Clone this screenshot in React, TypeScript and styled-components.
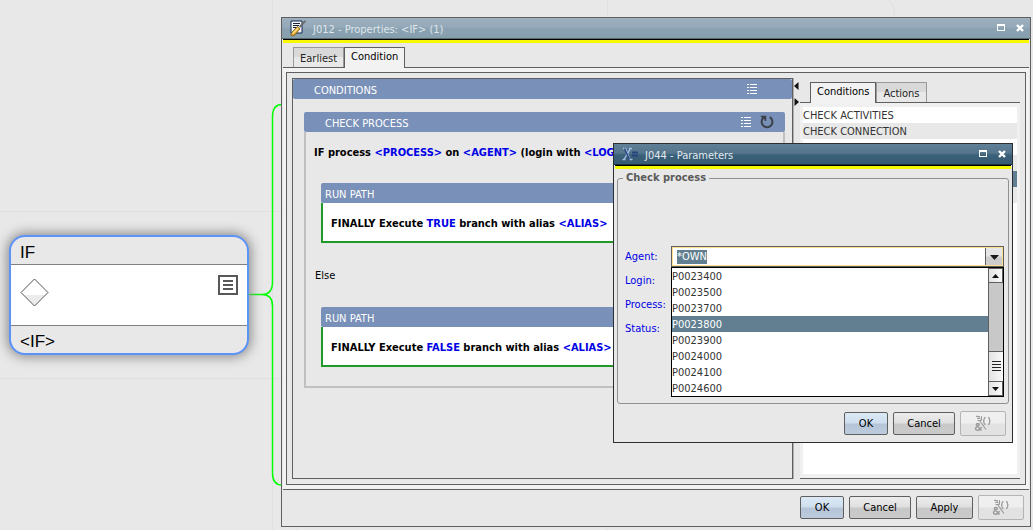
import React, { useEffect, useRef } from "react";
import styled, { createGlobalStyle } from "styled-components";

const GlobalStyle = createGlobalStyle`
  *, *::before, *::after { box-sizing: border-box; }
  body {
    margin: 0;
    background: #e8e8e8;
    color: #333;
    font: 11px/16px "DejaVu Sans Condensed", "Noto Sans", sans-serif;
  }
  button, input { font: inherit; color: inherit; margin: 0; padding: 0; }
  ul { margin: 0; padding: 0; list-style: none; }
`;

const Desktop = styled.main`
  position: relative;
  min-height: 100vh;
  overflow: hidden;
`;

const Canvas = styled.svg`
  position: absolute;
  inset: 0;
  width: 100%;
  height: 100%;
`;

/* workflow node */
const Node = styled.article`
  position: absolute;
  left: 9px;
  top: 235px;
  width: 240px;
  border: 2px solid #5c93f7;
  border-radius: 16px;
  overflow: hidden;
  background: #e8e8e8;
  color: #000;
  font: 17px/32px "Liberation Sans", sans-serif;
  box-shadow: 0 0 12px 2px #8c8c8c;
`;

const NodeCaption = styled.div`
  height: 27px;
  padding-left: 9px;
`;

const NodeBody = styled.div`
  display: flex;
  justify-content: space-between;
  align-items: flex-start;
  height: 62px;
  padding: 10px 9px;
  background: #fff;
  border: solid #808080;
  border-width: 1px 0;
`;

const IconButton = styled.button`
  display: flex;
  border: 0;
  background: none;
`;

/* windows */
const Window = styled.section<{ $active?: boolean }>`
  position: absolute;
  display: flex;
  flex-direction: column;
  padding: 0 1px;
  background: #e8e8e8;
  border: 1px solid ${(p) => (p.$active ? "#2b2f33" : "#5f5f5f")};
`;

const MainWindow = styled(Window)`
  inset: 17px 2px 3px 281px;
`;

const DialogWindow = styled(Window)`
  top: 143px;
  right: 20px;
  width: 400px;
`;

const TitleBar = styled.header<{ $active?: boolean }>`
  display: flex;
  align-items: center;
  height: 21px;
  margin: 0 -1px;
  padding: 0 6px 0 8px;
  color: ${(p) => (p.$active ? "#e4eaee" : "#dfe6ea")};
  border-bottom: 1px solid ${(p) => (p.$active ? "#1c3442" : "#5b6a72")};
  background: ${(p) =>
    p.$active
      ? "linear-gradient(#5f8096, #54758c 45%, #3a617a 55%, #375b72)"
      : "linear-gradient(#9db0bf, #94a9b9 45%, #8aa1b1 55%, #869fad)"};
`;

const TitleText = styled.h1`
  flex: 1;
  margin: 4px 0 0 7px;
  font-size: 11px;
  font-weight: 400;
`;

const TitleControls = styled.div`
  display: flex;
  gap: 11px;
`;

const Accent = styled.div`
  height: 4px;
  background: #f8f800;
  border-top: 1px solid #000;
`;

/* tabs */
const TabStrip = styled.div`
  display: flex;
  align-items: flex-end;
  height: 25px;
  padding-left: 10px;
  border-bottom: 1px solid #5f5f5f;
`;

const Tab = styled.button<{ $active?: boolean }>`
  height: ${(p) => (p.$active ? 21 : 20)}px;
  margin-bottom: ${(p) => (p.$active ? -1 : 0)}px;
  padding: ${(p) => (p.$active ? "0 6px 2px" : "3px 6px 0")};
  color: ${(p) => (p.$active ? "#000" : "#222")};
  border: 1px solid ${(p) => (p.$active ? "#5f5f5f" : "#999")};
  border-bottom: 0;
  background: ${(p) => (p.$active ? "#f2f2f2" : "linear-gradient(#d9d9d9 45%, #e8e8e8 45%)")};
`;

const TabPage = styled.div`
  flex: 1;
  display: flex;
  padding: 4px 3px;
  background: #f2f2f2;
  border-bottom: 1px solid #5f5f5f;
`;

const SplitPane = styled.div`
  flex: 1;
  display: flex;
  padding: 5px;
  background: #e8e8e8;
  border: 1px solid #5f5f5f;
`;

const ScriptPane = styled.div`
  flex: 1;
  min-width: 0;
  border: 1px solid #5f5f5f;
`;

const Splitter = styled.div`
  display: flex;
  flex-direction: column;
  gap: 8px;
  width: 7px;
  padding-top: 4px;
  border-left: 1px solid #b0b0b0;
`;

const SidePane = styled.div`
  display: flex;
  flex-direction: column;
  width: 220px;
`;

const SidePage = styled.div`
  flex: 1;
  display: flex;
  padding: 4px 3px;
  background: #f0f0f0;
  border-bottom: 1px solid #5f5f5f;
`;

const ConditionList = styled.ul`
  flex: 1;
  background: #fff;
`;

const ConditionItem = styled.li<{ $tone: "plain" | "alt" | "selected" }>`
  height: 16px;
  padding-top: 1px;
  background: ${(p) => ({ plain: "#fff", alt: "#e8e8e8", selected: "#617f90" })[p.$tone]};
  color: ${(p) => (p.$tone === "selected" ? "#fff" : "#333")};
`;

/* script blocks */
const BlockHeader = styled.div<{ $indent: number; $end?: number }>`
  display: flex;
  align-items: center;
  height: 20px;
  padding: 0 ${(p) => p.$end ?? 0}px 0 ${(p) => p.$indent}px;
  color: #fff;
  background: #7990b8;
  border-radius: 2px;
`;

const BlockTitle = styled.span`
  flex: 1;
  padding-top: 4px;
`;

const HeaderIcons = styled.div`
  display: flex;
  align-items: center;
  gap: 9px;
`;

const ConditionBlock = styled.section`
  margin: 13px 7px 0 11px;
`;

const ConditionBody = styled.div`
  padding: 13px 8px 19px;
  border: 2px solid #c0c0c0;
  border-top: 0;
`;

const Statement = styled.p`
  margin: 0;
  overflow: hidden;
  white-space: nowrap;
  font-weight: 700;
  color: #000;
`;

const ElseLabel = styled.p`
  margin: 25px 0 23px;
  padding: 0 1px;
  color: #000;
`;

const Param = styled.a`
  color: #0000e6;
  text-decoration: none;
`;

const PathBlock = styled.section<{ $first?: boolean }>`
  margin: ${(p) => (p.$first ? 22 : 0)}px 0 0 7px;
`;

const PathBody = styled.div`
  padding: 13px 8px 9px;
  background: #fff;
  border: 2px solid #23982a;
  border-top: 0;
`;

/* form */
const Form = styled.form`
  display: flex;
  flex-direction: column;
  padding: 1px 2px 2px;
`;

const Group = styled.fieldset`
  display: flex;
  flex-direction: column;
  height: 234px;
  margin: 0;
  padding: 61px 4px 0 7px;
  border: 1px solid #909090;
  border-radius: 3px;
  min-width: 0;
`;

const GroupTitle = styled.legend`
  margin-left: -2px;
  padding: 0 3px;
  font-weight: 700;
  color: #5a5a5a;
`;

const Field = styled.div`
  display: flex;
  height: 24px;
  padding-top: 2px;
`;

const FieldLabel = styled.label`
  width: 46px;
  color: #0000e6;
`;

const ComboArea = styled.div`
  position: relative;
  flex: 1;
  margin-top: -3px;
`;

const Combo = styled.div`
  display: flex;
  height: 21px;
  padding: 1px;
  border: 1px solid #5f5f5f;
  background: #ffe08a;
`;

const ComboInput = styled.input`
  flex: 1;
  min-width: 0;
  padding-left: 4px;
  border: 0;
  outline: 0;
  background: #fff;
  line-height: 14px;
  &::selection { background: #617f90; color: #fff; }
`;

const ComboArrow = styled.button`
  display: flex;
  align-items: center;
  justify-content: center;
  width: 17px;
  border: 0;
  border-left: 1px solid #5f5f5f;
  background: linear-gradient(#e6e6e6 45%, #cdcdcd 55%);
`;

const Popup = styled.div`
  position: absolute;
  left: 0;
  right: 0;
  top: 21px;
  display: flex;
  background: #fff;
  border: 1px solid #000;
`;

const Options = styled.ul`
  flex: 1;
`;

const Option = styled.li<{ $selected?: boolean }>`
  height: 16px;
  padding-top: 1px;
  color: ${(p) => (p.$selected ? "#fff" : "#333")};
  background: ${(p) => (p.$selected ? "#617f90" : "#fff")};
`;

const ScrollBar = styled.div`
  display: flex;
  flex-direction: column;
  width: 15px;
  border-left: 1px solid #5f5f5f;
  background: #c8c8c8;
`;

const ScrollButton = styled.button`
  display: flex;
  align-items: center;
  justify-content: center;
  height: 15px;
  border: 1px solid #5f5f5f;
  border-left: 0;
  background: linear-gradient(90deg, #e2e2e2, #fafafa);
`;

const ScrollTrack = styled.div`
  flex: 1;
  display: flex;
  flex-direction: column;
  justify-content: flex-end;
`;

const ScrollThumb = styled.div`
  display: flex;
  align-items: center;
  justify-content: center;
  height: 30px;
  border-top: 1px solid #5f5f5f;
  background: linear-gradient(90deg, #e2e2e2, #fafafa);
`;

/* buttons */
const ButtonBar = styled.footer`
  display: flex;
  justify-content: flex-end;
  align-items: center;
  gap: 5px;
  padding: 5px 5px 6px;
`;

const PushButton = styled.button<{ $primary?: boolean; $width: number }>`
  width: ${(p) => p.$width}px;
  height: 23px;
  padding-top: 1px;
  color: #000;
  border: 1px solid #5f5f5f;
  border-radius: 2px;
  background: ${(p) =>
    p.$primary
      ? "linear-gradient(#dce9f5, #cfdfee 45%, #b6c4d8 55%, #bccbdc)"
      : "linear-gradient(#ececec, #e0e0e0 45%, #c8c8c8 55%, #cacaca)"};
`;

const ToolButton = styled.button`
  display: flex;
  align-items: center;
  justify-content: center;
  width: 46px;
  height: 25px;
  border: 1px solid #b4b4b4;
  border-radius: 2px;
  background: linear-gradient(#efefef 45%, #e2e2e2 55%);
`;

function ListIcon() {
  return (
    <svg width="10" height="10" viewBox="0 0 10 10" fill="#fff" shapeRendering="crispEdges">
      {[0, 3, 6, 9].map((y) => (
        <path key={y} d={`M0 ${y}h2v1h-2zM3 ${y}h7v1h-7z`} />
      ))}
    </svg>
  );
}

function RedoIcon() {
  return (
    <svg width="14" height="14" viewBox="0 0 14 14" fill="none">
      <path d="M9.800 2.200a5.400 5.400 0 1 1-6.400.6" stroke="#3c4148" strokeWidth="2" />
      <path d="M.4 .8h5.800v5.200H4.800L4.400 3.800 3 4.200z" fill="#3c4148" />
    </svg>
  );
}

function MaximizeIcon() {
  return (
    <svg width="8" height="7" viewBox="0 0 8 7" shapeRendering="crispEdges">
      <path d="M0 0h8v7H0zM1 2v4h6V2z" fill="#fff" fillRule="evenodd" />
    </svg>
  );
}

function CloseIcon() {
  return (
    <svg width="8" height="8" viewBox="0 0 8 8">
      <path d="M1 1l6 6M7 1L1 7" stroke="#fff" strokeWidth="2.400" />
    </svg>
  );
}

function Triangle({ dir }: { dir: "up" | "down" | "left" | "right" }) {
  const paths = {
    up: ["7 4", "M0 4h7L3.500 0z"],
    down: ["7 4", "M0 0h7L3.500 4z"],
    left: ["5 8", "M4.500 0v8L0 4z"],
    right: ["5 8", "M.5 0v8L5 4z"],
  };
  const [size, d] = paths[dir];
  const [w, h] = size.split(" ");
  return (
    <svg width={w} height={h} viewBox={`0 0 ${size}`}>
      <path d={d} fill="#111" />
    </svg>
  );
}

function ComboTriangle() {
  return (
    <svg width="9" height="6" viewBox="0 0 9 6">
      <path d="M0 1h9L4.500 6z" fill="#1a1a1a" />
    </svg>
  );
}

function RuleIcon() {
  return (
    <svg width="18" height="17" viewBox="0 0 18 17" fill="none" stroke="#9c9c9c">
      <path d="M2 1.500h4M3 3.500h3" />
      <path d="M3 .5L7 4.500M7.500 1v4.500H3.500" />
      <path d="M5.500 5.500l6.500 9" strokeWidth="1.200" />
      <path d="M11.500 2.500c-1.500 0-1.500 1-1.500 2s0 1.500-1 1.500c1 0 1 1 1 1.800s0 1.700 1.500 1.700" strokeWidth="1.300" />
      <path d="M14 2.500c1.500 0 1.500 1 1.500 2s0 1.500 1 1.500c-1 0-1 1-1 1.800s0 1.700-1.500 1.700" strokeWidth="1.300" />
      <path d="M7.500 15.500L2.500 10c-.8-1.600 2.800-2.200 2.800-.5 0 1.500-3.800 1.700-3.800 4 0 2.800 4.500 2.400 6-1.500" strokeWidth="1.500" />
    </svg>
  );
}

function PropertiesIcon() {
  return (
    <svg width="16" height="17" viewBox="0 0 16 17">
      <path d="M1 1h11v12H1z" fill="#f4f6fa" stroke="#12294f" />
      <path d="M3 3.500h7M3 5.500h6M3 7.500h4" stroke="#16233c" />
      <path d="M15.500 .8L9.500 7" stroke="#6b6b6b" strokeWidth="1.800" />
      <path d="M.8 14.800L2.500 11.500 7.500 6.500l2.500 2.300-5 6-3 1.200z" fill="#e3a62c" stroke="#7d5710" strokeWidth=".8" />
      <path d="M2.500 13.800L8 8.300" stroke="#fbe29a" strokeWidth="1.300" />
    </svg>
  );
}

function VariablesIcon() {
  return (
    <svg width="16" height="14" viewBox="0 0 16 14" fill="none">
      <path d="M1 1.500h2.500L8 12.500h2.500M8.500 1.500L2 12.500M7 1.500h3M.5 12.500h3" stroke="#a3bfe6" strokeWidth="1.400" />
      <path d="M2.500 1.500L7.500 12.500" stroke="#27457f" strokeWidth="1.400" />
      <path d="M10 5.500h6M10 8.500h6" stroke="#27457f" strokeWidth="2" />
    </svg>
  );
}

function DiamondIcon() {
  return (
    <svg width="29" height="32" viewBox="0 -3 29 32">
      <path d="M4 17h21L14.500 27z" fill="#ececec" />
      <path d="M14.500 1L28 14.500 14.500 28 1 14.500z" fill="none" stroke="#505050" />
    </svg>
  );
}

function NotesIcon() {
  return (
    <svg width="20" height="20" viewBox="0 0 20 20" shapeRendering="crispEdges">
      <path d="M0 0h20v20H0zM2 2v16h16V2z" fill="#585858" fillRule="evenodd" />
      <path d="M5 6h10M5 10h10M5 14h10" stroke="#585858" strokeWidth="2" />
    </svg>
  );
}

function TitleButtons() {
  return (
    <TitleControls>
      <IconButton type="button" aria-label="Maximize"><MaximizeIcon /></IconButton>
      <IconButton type="button" aria-label="Close"><CloseIcon /></IconButton>
    </TitleControls>
  );
}

function RunPath({ branch, first }: { branch: string; first?: boolean }) {
  return (
    <PathBlock $first={first}>
      <BlockHeader $indent={4}>
        <BlockTitle>RUN PATH</BlockTitle>
      </BlockHeader>
      <PathBody>
        <Statement>
          FINALLY Execute <Param href="#">{branch}</Param> branch with alias <Param href="#">&lt;ALIAS&gt;</Param>
        </Statement>
      </PathBody>
    </PathBlock>
  );
}

const conditionRows: { text: string; tone: "plain" | "alt" | "selected" }[] = [
  { text: "CHECK ACTIVITIES", tone: "plain" },
  { text: "CHECK CONNECTION", tone: "alt" },
  { text: "", tone: "plain" },
  { text: "", tone: "alt" },
  { text: "", tone: "selected" },
  { text: "", tone: "alt" },
];

const agents = ["P0023400", "P0023500", "P0023700", "P0023800", "P0023900", "P0024000", "P0024100", "P0024600"];

function ParametersDialog() {
  const agentRef = useRef<HTMLInputElement>(null);
  useEffect(() => {
    agentRef.current?.focus();
    agentRef.current?.select();
  }, []);

  return (
    <DialogWindow $active role="dialog" aria-label="Parameters">
      <TitleBar $active>
        <VariablesIcon />
        <TitleText>J044 - Parameters</TitleText>
        <TitleButtons />
      </TitleBar>
      <Accent />
      <Form onSubmit={(e) => e.preventDefault()}>
        <Group>
          <GroupTitle>Check process</GroupTitle>
          <Field>
            <FieldLabel htmlFor="agent">Agent:</FieldLabel>
            <ComboArea>
              <Combo>
                <ComboInput
                  ref={agentRef}
                  id="agent"
                  role="combobox"
                  aria-expanded="true"
                  aria-controls="agent-options"
                  defaultValue="*OWN"
                />
                <ComboArrow type="button" aria-label="Show agents"><ComboTriangle /></ComboArrow>
              </Combo>
              <Popup>
                <Options id="agent-options" role="listbox">
                  {agents.map((name) => (
                    <Option key={name} role="option" $selected={name === "P0023800"} aria-selected={name === "P0023800"}>
                      {name}
                    </Option>
                  ))}
                </Options>
                <ScrollBar>
                  <ScrollButton type="button" aria-label="Scroll up"><Triangle dir="up" /></ScrollButton>
                  <ScrollTrack>
                    <ScrollThumb>
                      <svg width="9" height="11" viewBox="0 0 9 11" shapeRendering="crispEdges">
                        <path d="M0 .5h9M0 3.500h9M0 6.500h9M0 9.500h9" stroke="#222" />
                      </svg>
                    </ScrollThumb>
                  </ScrollTrack>
                  <ScrollButton type="button" aria-label="Scroll down"><Triangle dir="down" /></ScrollButton>
                </ScrollBar>
              </Popup>
            </ComboArea>
          </Field>
          <Field><FieldLabel as="span">Login:</FieldLabel></Field>
          <Field><FieldLabel as="span">Process:</FieldLabel></Field>
          <Field><FieldLabel as="span">Status:</FieldLabel></Field>
        </Group>
      </Form>
      <ButtonBar>
        <PushButton type="button" $primary $width={44}>OK</PushButton>
        <PushButton type="button" $width={62}>Cancel</PushButton>
        <ToolButton type="button" disabled aria-label="Insert rule"><RuleIcon /></ToolButton>
      </ButtonBar>
    </DialogWindow>
  );
}

export default function App() {
  return (
    <Desktop>
      <GlobalStyle />
      <Canvas aria-hidden="true" fill="none">
        <path d="M272.500 0V530M607.500 0V530M894.500 530V12Q894 4 888 0M296.500 526V530M0 211.500H281M0 378.500H281" stroke="#e0e0e0" />
        <path
          d="M249 294.500H262Q272.500 294.500 272.500 282V117Q272.500 104.500 282 104.500M262 294.500Q272.500 294.500 272.500 306V473Q272.500 485 282 485"
          stroke="#00ff00"
          strokeWidth="1.500"
        />
      </Canvas>

      <Node>
        <NodeCaption>IF</NodeCaption>
        <NodeBody>
          <DiamondIcon />
          <IconButton type="button" aria-label="Notes"><NotesIcon /></IconButton>
        </NodeBody>
        <NodeCaption>&lt;IF&gt;</NodeCaption>
      </Node>

      <MainWindow>
        <TitleBar>
          <PropertiesIcon />
          <TitleText>J012 - Properties: &lt;IF&gt; (1)</TitleText>
          <TitleButtons />
        </TitleBar>
        <Accent />
        <TabStrip role="tablist">
          <Tab type="button" role="tab">Earliest</Tab>
          <Tab type="button" role="tab" $active aria-selected="true">Condition</Tab>
        </TabStrip>
        <TabPage>
          <SplitPane>
            <ScriptPane>
              <BlockHeader $indent={21} $end={35}>
                <BlockTitle>CONDITIONS</BlockTitle>
                <HeaderIcons>
                  <IconButton type="button" aria-label="Conditions menu"><ListIcon /></IconButton>
                </HeaderIcons>
              </BlockHeader>
              <ConditionBlock>
                <BlockHeader $indent={21} $end={11}>
                  <BlockTitle>CHECK PROCESS</BlockTitle>
                  <HeaderIcons>
                    <IconButton type="button" aria-label="Process menu"><ListIcon /></IconButton>
                    <IconButton type="button" aria-label="Reset"><RedoIcon /></IconButton>
                  </HeaderIcons>
                </BlockHeader>
                <ConditionBody>
                  <Statement>
                    IF process <Param href="#">&lt;PROCESS&gt;</Param> on <Param href="#">&lt;AGENT&gt;</Param> (login with{" "}
                    <Param href="#">&lt;LOG</Param>
                  </Statement>
                  <RunPath branch="TRUE" first />
                  <ElseLabel>Else</ElseLabel>
                  <RunPath branch="FALSE" />
                </ConditionBody>
              </ConditionBlock>
            </ScriptPane>
            <Splitter>
              <Triangle dir="left" />
              <Triangle dir="right" />
            </Splitter>
            <SidePane>
              <TabStrip role="tablist">
                <Tab type="button" role="tab" $active aria-selected="true">Conditions</Tab>
                <Tab type="button" role="tab">Actions</Tab>
              </TabStrip>
              <SidePage>
                <ConditionList>
                  {conditionRows.map((row, i) => (
                    <ConditionItem key={i} $tone={row.tone}>{row.text}</ConditionItem>
                  ))}
                </ConditionList>
              </SidePage>
            </SidePane>
          </SplitPane>
        </TabPage>
        <ButtonBar>
          <PushButton type="button" $primary $width={44}>OK</PushButton>
          <PushButton type="button" $width={62}>Cancel</PushButton>
          <PushButton type="button" $width={57}>Apply</PushButton>
          <ToolButton type="button" disabled aria-label="Insert rule"><RuleIcon /></ToolButton>
        </ButtonBar>
      </MainWindow>

      <ParametersDialog />
    </Desktop>
  );
}
